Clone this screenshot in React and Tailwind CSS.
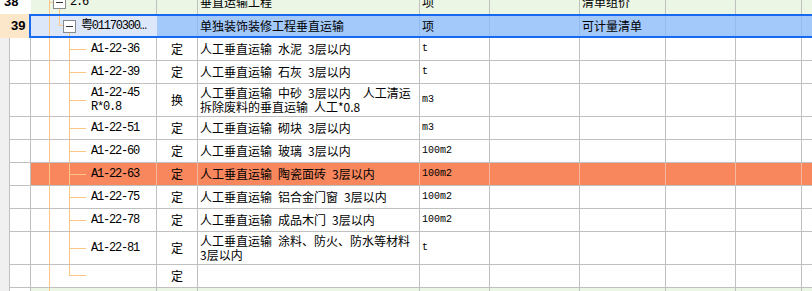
import React from 'react';

const S = '\u2002';

const items = [
  { code: ['A1-22-36'], type: '定', name: [`人工垂直运输${S}水泥${S}3层以内`], unit: 't' },
  { code: ['A1-22-39'], type: '定', name: [`人工垂直运输${S}石灰${S}3层以内`], unit: 't' },
  {
    code: ['A1-22-45', 'R*0.8'],
    type: '换',
    name: [`人工垂直运输${S}中砂${S}3层以内${S}${S}人工清运`, `拆除废料的垂直运输${S}人工*0.8`],
    unit: 'm3',
    tall: true,
  },
  { code: ['A1-22-51'], type: '定', name: [`人工垂直运输${S}砌块${S}3层以内`], unit: 'm3' },
  { code: ['A1-22-60'], type: '定', name: [`人工垂直运输${S}玻璃${S}3层以内`], unit: '100m2' },
  { code: ['A1-22-63'], type: '定', name: [`人工垂直运输${S}陶瓷面砖${S}3层以内`], unit: '100m2', hl: true },
  { code: ['A1-22-75'], type: '定', name: [`人工垂直运输${S}铝合金门窗${S}3层以内`], unit: '100m2' },
  { code: ['A1-22-78'], type: '定', name: [`人工垂直运输${S}成品木门${S}3层以内`], unit: '100m2' },
  {
    code: ['A1-22-81'],
    type: '定',
    name: [`人工垂直运输${S}涂料、防火、防水等材料`, '3层以内'],
    unit: 't',
    tall: true,
  },
  { code: [], type: '定', name: [], unit: '', last: true },
];

function MinusBox() {
  return (
    <div className="w-[13px] h-[13px] shrink-0 border border-[#8a8a8a] bg-white flex items-center justify-center">
      <div className="w-[7px] h-px bg-[#333]" />
    </div>
  );
}

function Branch({ last, children }) {
  return (
    <div className="flex h-full">
      <div className="w-[18px] shrink-0" />
      <div className="w-[20px] shrink-0 border-l border-[#fcc784]" />
      {last ? (
        <div className="w-[17px] shrink-0 flex flex-col">
          <div className="h-1/2 border-l border-b border-[#fcc784]" />
        </div>
      ) : (
        <div className="w-[17px] shrink-0 border-l border-[#fcc784] flex items-center">
          <div className="h-px w-full bg-[#fcc784]" />
        </div>
      )}
      <div className="pl-[5px] flex flex-col justify-center font-['Liberation_Mono','Noto_Sans_CJK_SC',monospace] text-[12px] tracking-[-1.2px] leading-[14px]">
        {children.map((c) => (
          <div key={c}>{c}</div>
        ))}
      </div>
    </div>
  );
}

function ItemRow({ it }) {
  const h = it.tall ? 'h-[33px]' : 'h-[23px]';
  const bg = it.hl ? 'bg-[#f8875d] border-r-[#f3b89f]' : 'bg-white';
  return (
    <div className={`flex ${h}`}>
      {/* row header strip */}
      <div className="w-[10px] shrink-0 bg-[#f0f0f0] border-r border-[#c0c0c0]" />
      <div className="w-[21px] shrink-0 bg-white border-r border-b border-[#c0c0c0]" />
      <div className={`w-[126px] shrink-0 border-r border-b border-[#c0c0c0] ${bg}`}>
        <Branch last={it.last}>{it.code}</Branch>
      </div>
      <div className={`w-[41px] shrink-0 border-r border-b border-[#c0c0c0] ${bg} flex items-center justify-center`}>
        {it.type}
      </div>
      <div className={`w-[222px] shrink-0 border-r border-b border-[#c0c0c0] ${bg} pl-[2px] flex flex-col justify-center whitespace-pre`}>
        {it.name.map((n) => (
          <div key={n}>{n}</div>
        ))}
      </div>
      <div className={`w-[70px] shrink-0 border-r border-b border-[#c0c0c0] ${bg} pl-[2px] flex items-center font-['Liberation_Mono',monospace] text-[10px]`}>
        {it.unit}
      </div>
      <div className={`w-[90px] shrink-0 border-r border-b border-[#c0c0c0] ${bg}`} />
      <div className={`w-[86px] shrink-0 border-r border-b border-[#c0c0c0] ${bg}`} />
      <div className={`w-[70px] shrink-0 border-r border-b border-[#c0c0c0] ${bg}`} />
      <div className={`w-[66px] shrink-0 border-r border-b border-[#c0c0c0] ${bg}`} />
      <div className={`flex-1 border-b border-[#c0c0c0] ${bg}`} />
    </div>
  );
}

export default function App() {
  return (
    <div className="w-[812px] h-[291px] overflow-hidden bg-white text-black font-['Noto_Sans_CJK_SC',sans-serif] text-[12px] leading-[14px]">
      <div className="-mt-[10px] w-[812px]">
        {/* Row 38 - parent group */}
        <div className="flex h-[24px]">
          <div className="w-[31px] shrink-0 bg-white pl-[4px] flex items-center font-['Liberation_Sans',sans-serif] font-bold text-[13px]">
            38
          </div>
          <div className="w-[126px] shrink-0 bg-[#ecf6e5] border-r border-[#c0c0c0] flex">
            <div className="w-[18px] shrink-0" />
            <div className="w-[4px] shrink-0 border-l border-[#fcc784] flex items-center">
              <div className="h-px w-full bg-[#fcc784]" />
            </div>
            <div className="w-[13px] shrink-0 flex flex-col">
              <div className="flex-1" />
              <MinusBox />
              <div className="flex-1 flex">
                <div className="w-[6px]" />
                <div className="w-px bg-[#fcc784]" />
              </div>
            </div>
            <div className="pl-[4px] flex items-center font-['Liberation_Mono',monospace] text-[12px] tracking-[-1.2px]">
              2.6
            </div>
          </div>
          <div className="w-[41px] shrink-0 bg-[#ecf6e5] border-r border-[#c0c0c0]" />
          <div className="w-[222px] shrink-0 bg-[#ecf6e5] border-r border-[#c0c0c0] pl-[2px] flex items-center">
            垂直运输工程
          </div>
          <div className="w-[70px] shrink-0 bg-[#ecf6e5] border-r border-[#c0c0c0] pl-[2px] flex items-center">项</div>
          <div className="w-[90px] shrink-0 bg-[#ecf6e5] border-r border-[#c0c0c0]" />
          <div className="w-[86px] shrink-0 bg-[#ecf6e5] border-r border-[#c0c0c0] pl-[2px] flex items-center">清单组价</div>
          <div className="w-[70px] shrink-0 bg-[#ecf6e5] border-r border-[#c0c0c0]" />
          <div className="w-[66px] shrink-0 bg-[#ecf6e5] border-r border-[#c0c0c0]" />
          <div className="flex-1 bg-[#ecf6e5]" />
        </div>

        {/* Row 39 - selected bill item */}
        <div className="flex h-[24px]">
          <div className="w-[29px] shrink-0 bg-[#fde7cb] pl-[11px] flex items-center font-['Liberation_Sans',sans-serif] font-bold text-[13px]">
            39
          </div>
          <div className="flex-1 flex border-l-2 border-y-2 border-[#1769f0]">
            <div className="w-[126px] shrink-0 bg-[#dce8fa] flex">
              <div className="w-[18px] shrink-0" />
              <div className="w-[10px] shrink-0 border-l border-[#fcc784]" />
              <div className="w-[4px] shrink-0 flex flex-col">
                <div className="h-1/2 border-l border-b border-[#fcc784]" />
              </div>
              <div className="w-[13px] shrink-0 flex flex-col">
                <div className="flex-1" />
                <MinusBox />
                <div className="flex-1 flex">
                  <div className="w-[6px]" />
                  <div className="w-px bg-[#fcc784]" />
                </div>
              </div>
              <div className="pl-[5px] flex items-center font-['Liberation_Mono','Noto_Sans_CJK_SC',monospace] text-[12px] tracking-[-1.2px] whitespace-nowrap">
                粤01170300…
              </div>
            </div>
            <div className="w-[41px] shrink-0 bg-[#a3c8fa] border-r border-[#93bbf0]" />
            <div className="w-[222px] shrink-0 bg-[#a3c8fa] border-r border-[#93bbf0] pl-[2px] flex items-center">
              单独装饰装修工程垂直运输
            </div>
            <div className="w-[70px] shrink-0 bg-[#a3c8fa] border-r border-[#93bbf0] pl-[2px] flex items-center">项</div>
            <div className="w-[90px] shrink-0 bg-[#a3c8fa] border-r border-[#93bbf0]" />
            <div className="w-[86px] shrink-0 bg-[#a3c8fa] border-r border-[#93bbf0] pl-[2px] flex items-center">可计量清单</div>
            <div className="w-[70px] shrink-0 bg-[#a3c8fa] border-r border-[#93bbf0]" />
            <div className="w-[66px] shrink-0 bg-[#a3c8fa] border-r border-[#93bbf0]" />
            <div className="flex-1 bg-[#a3c8fa]" />
          </div>
        </div>

        {/* quota sub-items */}
        {items.map((it, i) => (
          <ItemRow key={i} it={it} />
        ))}

        {/* next group (green) */}
        <div className="flex h-[23px]">
          <div className="w-[10px] shrink-0 bg-[#f0f0f0] border-r border-[#c0c0c0]" />
          <div className="w-[21px] shrink-0 bg-white border-r border-[#c0c0c0]" />
          <div className="w-[126px] shrink-0 bg-[#ecf6e5] border-r border-[#c0c0c0] flex">
            <div className="w-[18px] shrink-0" />
            <div className="border-l border-[#fcc784]" />
          </div>
          <div className="w-[41px] shrink-0 bg-[#ecf6e5] border-r border-[#c0c0c0]" />
          <div className="w-[222px] shrink-0 bg-[#ecf6e5] border-r border-[#c0c0c0]" />
          <div className="w-[70px] shrink-0 bg-[#ecf6e5] border-r border-[#c0c0c0]" />
          <div className="w-[90px] shrink-0 bg-[#ecf6e5] border-r border-[#c0c0c0]" />
          <div className="w-[86px] shrink-0 bg-[#ecf6e5] border-r border-[#c0c0c0]" />
          <div className="w-[70px] shrink-0 bg-[#ecf6e5] border-r border-[#c0c0c0]" />
          <div className="w-[66px] shrink-0 bg-[#ecf6e5] border-r border-[#c0c0c0]" />
          <div className="flex-1 bg-[#ecf6e5]" />
        </div>
      </div>
    </div>
  );
}
